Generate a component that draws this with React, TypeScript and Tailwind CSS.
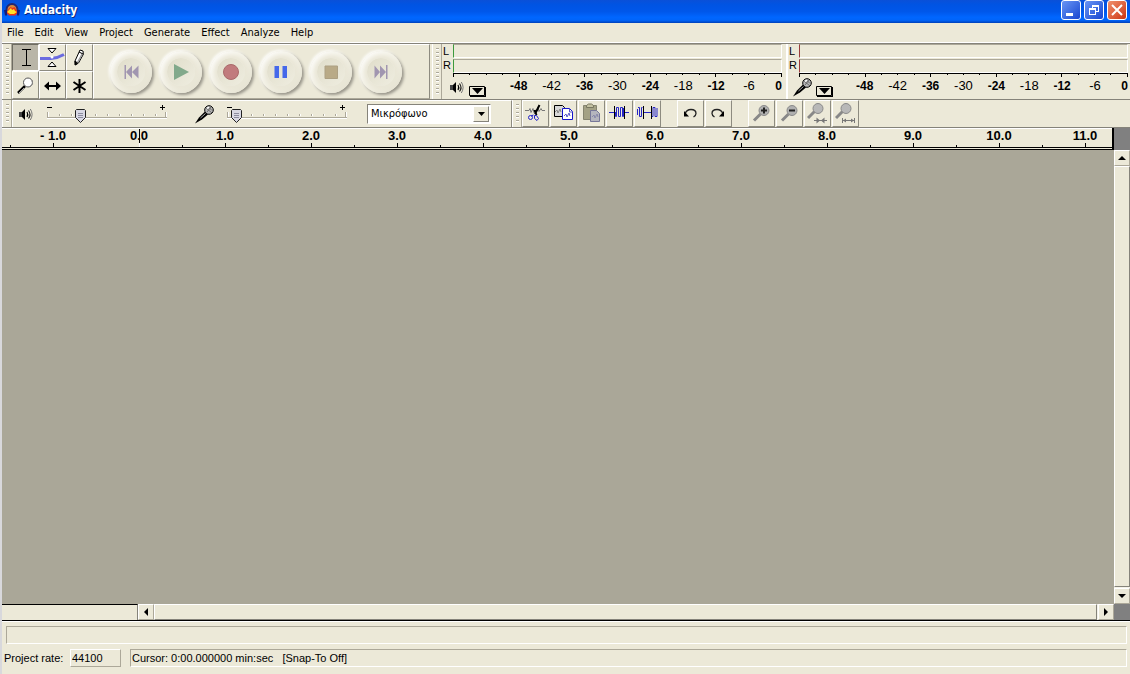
import { useState } from 'react';
import type { ReactNode } from 'react';

const menus = ['File', 'Edit', 'View', 'Project', 'Generate', 'Effect', 'Analyze', 'Help'];
const seconds = [-1, 0, 1, 2, 3, 4, 5, 6, 7, 8, 9, 10, 11];
const levels = [-48, -42, -36, -30, -24, -18, -12, -6];

function Grabber() {
  return (
    <div className="flex w-2.5 shrink-0 justify-center border-r border-[#aca899] border-l border-l-white py-1">
      <div className="w-[3px] bg-[repeating-linear-gradient(to_bottom,#aca899_0px,#aca899_1px,#ffffff_1px,#ffffff_2px,transparent_2px,transparent_4px)]" />
    </div>
  );
}

function Speaker() {
  return (
    <svg width="14" height="13" viewBox="0 0 14 13" className="shrink-0" fill="none">
      <path d="M0 4h3v5H0z" fill="#444" />
      <path d="M3 4l3-3v11l-3-3z" fill="#000" />
      <path d="M8 4q1.600 2.500 0 5" stroke="#000" strokeWidth="1.200" />
      <path d="M9.500 2.500q3 4 0 8" stroke="#222" strokeWidth="1.200" />
      <path d="M11.300 1q3.600 5.500 0 11" stroke="#777" />
    </svg>
  );
}

function Mic() {
  return (
    <svg width="20" height="20" viewBox="0 0 20 20" className="shrink-0">
      <path d="M0 19.500l4-6 6-6 3 3-6 5z" fill="#000" />
      <path d="M5.500 14l5-4.500" stroke="#aaa" />
      <circle cx="14" cy="6" r="4.300" fill="#b8b8b8" stroke="#000" />
      <path d="M11 4l6 5M13 2.500l4 4M12 8l4-5" stroke="#555" strokeWidth="0.800" />
      <path d="M12 4.500l2-1.500" stroke="#fff" strokeWidth="1.500" />
    </svg>
  );
}

const toolIcons: { name: string; icon: ReactNode }[] = [
  {
    name: 'Selection',
    icon: <path d="M9 4.500h9M9 20.500h9M13.500 5v15" stroke="#000" />,
  },
  {
    name: 'Envelope',
    icon: (
      <>
        <path d="M0 13.500h11q7-.500 13-4" stroke="#6b6be0" strokeWidth="3" />
        <path d="M8 3.500h8l-4 4.500zM8 21.500h8l-4-4.500z" fill="#fff" stroke="#000" />
        <circle cx="12" cy="12" r="1.500" fill="#fff" />
      </>
    ),
  },
  {
    name: 'Draw',
    icon: (
      <>
        <path d="M13 5l3 1 .5 3-5 9-3 2-.5-4z" fill="#fff" stroke="#000" />
        <path d="M16 7.500l-5.500 10" stroke="#999" strokeWidth="1.500" />
        <path d="M12 7l4 2M8 20v-4l2.500 2z" stroke="#000" fill="#000" />
      </>
    ),
  },
  {
    name: 'Zoom',
    icon: (
      <>
        <path d="M12 13l-7 7" stroke="#000" strokeWidth="2.500" />
        <path d="M11 15l-5 5" stroke="#aaa" />
        <circle cx="15" cy="9.500" r="4.500" fill="#fff" stroke="#555" />
        <path d="M19 7q2 4-2 7" stroke="#888" />
      </>
    ),
  },
  {
    name: 'Time Shift',
    icon: (
      <>
        <path d="M6 13h13" stroke="#000" strokeWidth="2" />
        <path d="M9 8.500v9L4 13zM16 8.500v9l5-4.500z" fill="#000" />
      </>
    ),
  },
  {
    name: 'Multi-Tool',
    icon: <path d="M12.500 6v14M6.500 9l12 8M18.500 9l-12 8" stroke="#000" strokeWidth="2" />,
  },
];

const transport: { name: string; icon: ReactNode }[] = [
  {
    name: 'Skip to Start',
    icon: <path d="M1.500 1h1.500v14H1.500zM9 1.500v13l-6-6.500zM15.500 1.500v13L9 8z" fill="#a196b0" />,
  },
  { name: 'Play', icon: <path d="M1 0l15 8-15 8z" fill="#82a98b" /> },
  { name: 'Record', icon: <circle cx="8" cy="8" r="7.500" fill="#c17b7d" stroke="#a96a6a" /> },
  { name: 'Pause', icon: <path d="M1.500 2H6v12H1.500zM9.500 2H14v12H9.500z" fill="#4568ea" /> },
  { name: 'Stop', icon: <path d="M2 2h12.500v12.500H2z" fill="#b9aa87" stroke="#ada083" /> },
  {
    name: 'Skip to End',
    icon: <path d="M13 1h1.500v14H13zM7 1.500v13L13 8zM1.500 1.500v13L7 8z" fill="#a196b0" />,
  },
];

const editIcons: { name: string; icon: ReactNode }[] = [
  {
    name: 'Cut',
    icon: (
      <>
        <path d="M0 7.500h4l1-2 1 4 2-4 1 4 1-2 1 2 2-5 1 4 2-3 1 2h3" stroke="#777" />
        <path d="M14.500 2l-4.500 9M9.500 7l2 5" stroke="#000" strokeWidth="2" />
        <path d="M8.500 12L6 13" stroke="#2222c8" />
        <circle cx="5.500" cy="14.500" r="2" stroke="#2222c8" />
        <path d="M9.500 12.500h2l2 3-1.500 2-2.500-2z" stroke="#2222c8" />
      </>
    ),
  },
  {
    name: 'Copy',
    icon: (
      <>
        <path d="M1.500 2.500h8l2 2v9h-10z" fill="#d8d8d8" stroke="#000" />
        <path d="M2 9l2-2 1 3 2-4 1 3" stroke="#888" />
        <path d="M9.500 5.500h7l3 3v8h-10z" fill="#fff" stroke="#1515cc" />
        <path d="M16.500 6v3h3M11 13l2-2 1 3 2-4 1 3" stroke="#5555cc" />
      </>
    ),
  },
  {
    name: 'Paste',
    icon: (
      <>
        <path d="M2.500 2.500h13v14h-13z" fill="#a3a184" stroke="#85846f" />
        <path d="M5.500 4.500v-2l2-1.500h3l2 1.500v2z" fill="#c4c2a2" stroke="#77765f" />
        <path d="M9.500 7.500h6l3 3v8h-9z" fill="#b5b5bd" stroke="#777799" />
        <path d="M11 14l2-2 1 3 2-4 1 3" stroke="#8888aa" />
      </>
    ),
  },
  {
    name: 'Trim',
    icon: (
      <>
        <path d="M0 9.500h5M16 9.500h4" stroke="#2525c5" />
        <path d="M6.500 9v4.500h1V4.500h2v9h2v-9h2v9h1V5" stroke="#2525c5" />
        <path d="M5.500 3v13M15.500 3v13" stroke="#000" />
      </>
    ),
  },
  {
    name: 'Silence',
    icon: (
      <>
        <path d="M.5 6v6M1 4.500h1.500v9h2v-9h1M7 9.500h7M14.500 13.500h1.500v-9h2v9h2V5" stroke="#2525c5" />
        <path d="M6.500 3v13M14.500 3v13" stroke="#000" />
      </>
    ),
  },
];

const undoIcons: { name: string; icon: ReactNode }[] = [
  {
    name: 'Undo',
    icon: (
      <>
        <path d="M5 11q1.500-4.500 6-4.500 5 0 5 4 0 2-2.500 3.500" stroke="#222" strokeWidth="1.300" />
        <path d="M4 8v5.500h5z" fill="#000" />
      </>
    ),
  },
  {
    name: 'Redo',
    icon: (
      <>
        <path d="M15 11q-1.500-4.500-6-4.500-5 0-5 4 0 2 2.500 3.500" stroke="#222" strokeWidth="1.300" />
        <path d="M16 8v5.500h-5z" fill="#000" />
      </>
    ),
  },
];

const zoomIcons: { name: string; icon: ReactNode }[] = [
  {
    name: 'Zoom In',
    icon: (
      <>
        <path d="M9.500 11L3 17.500" stroke="#888" strokeWidth="3" />
        <circle cx="13" cy="7.500" r="5" fill="#b0b0b0" stroke="#8a8a8a" />
        <path d="M13 4.500v6M10 7.500h6" stroke="#222" strokeWidth="2" />
      </>
    ),
  },
  {
    name: 'Zoom Out',
    icon: (
      <>
        <path d="M9.500 11L3 17.500" stroke="#888" strokeWidth="3" />
        <circle cx="13" cy="7.500" r="5" fill="#b0b0b0" stroke="#8a8a8a" />
        <path d="M10 7.500h6" stroke="#222" strokeWidth="2" />
      </>
    ),
  },
  {
    name: 'Fit Selection',
    icon: (
      <>
        <path d="M7.500 8.500L1 15" stroke="#888" strokeWidth="3" />
        <circle cx="11" cy="5.500" r="5" fill="#b8b8b8" stroke="#8a8a8a" />
        <path d="M7 17.500h13" stroke="#777" />
        <path d="M9.500 14.500l3.500 3-3.500 3zM17.500 14.500l-3.500 3 3.500 3z" fill="#777" />
      </>
    ),
  },
  {
    name: 'Fit Project',
    icon: (
      <>
        <path d="M7.500 8.500L1 15" stroke="#888" strokeWidth="3" />
        <circle cx="11" cy="5.500" r="5" fill="#b8b8b8" stroke="#8a8a8a" />
        <path d="M7.500 15v5M19.500 15v5M8 17.500h11" stroke="#777" />
        <path d="M8 17.500l3-2v4zM19 17.500l-3-2v4z" fill="#777" />
      </>
    ),
  },
];

function IconGroup({ items }: { items: { name: string; icon: ReactNode }[] }) {
  return (
    <div className="flex gap-px">
      {items.map((item) => (
        <button
          key={item.name}
          aria-label={item.name}
          className="flex w-[27px] items-center justify-center border-t border-l border-r border-b border-t-white border-l-white border-r-[#8d8b80] border-b-[#8d8b80]"
        >
          <svg width="21" height="21" viewBox="0 0 21 21" fill="none">{item.icon}</svg>
        </button>
      ))}
    </div>
  );
}

function VolumeSlider({ label, initial }: { label: string; initial: number }) {
  const [value, setValue] = useState(initial);
  const x = 3 + value * 1.05;

  return (
    <div className="relative h-5 w-[120px]">
      <svg width="120" height="20" viewBox="0 0 120 20" fill="none" shapeRendering="crispEdges">
        <path d="M0 3.500h5M113 3.500h5M115.500 1v5" stroke="#000" />
        <path d="M0 13.500h120" stroke="#aca899" />
        <path d="M0 14.500h120" stroke="#fff" />
        {Array.from({ length: 11 }, (_, i) => (
          <g key={i}>
            <path d={`M${i * 12 - (i === 10 ? 2 : 0) + 0.5} ${i % 10 ? 10 : 8}v${i % 10 ? 2 : 5}`} stroke="#aca899" />
            <path d={`M${i * 12 - (i === 10 ? 2 : 0) + 1.5} ${i % 10 ? 10 : 8}v${i % 10 ? 2 : 5}`} stroke="#fff" />
          </g>
        ))}
        <g transform={`translate(${Math.round(x)} 5)`} shapeRendering="auto">
          <path d="M1.500 .5h8l1 1v7l-5 5-5-5v-7z" fill="#d8d8e4" stroke="#222" />
          <path d="M3 4.500h5M3 6.500h5M3 8.500h5" stroke="#8c8ca0" />
        </g>
      </svg>
      <input
        type="range"
        aria-label={label}
        value={value}
        onChange={(e) => setValue(Number(e.target.value))}
        className="absolute inset-0 h-full w-full opacity-0"
      />
    </div>
  );
}

function Meter({ kind }: { kind: 'output' | 'input' }) {
  const edge = kind === 'output' ? 'border-l-[#3c9a3c]' : 'border-l-[#9a3c3c]';

  return (
    <div className={kind === 'output' ? 'flex flex-1 pr-1' : 'flex flex-1 border-l-2 border-white pr-0.5'}>
      <div className="w-[11px] shrink-0 pl-px text-[11px] leading-[14px]">
        <div>L</div>
        <div>R</div>
      </div>
      <div className="min-w-0 flex-1">
        <div className={`h-3.5 border border-[#aca899] border-r-white border-b-white ${edge}`} />
        <div className={`mt-px h-3.5 border border-[#aca899] border-r-white border-b-white ${edge}`} />
        <div className="flex h-1 items-start justify-between border-t border-black">
          {Array.from({ length: 21 }, (_, i) => (
            <span key={i} className={i % 4 === 0 ? 'h-[3px] w-px bg-black' : 'h-px w-px bg-black'} />
          ))}
        </div>
        <div className="flex h-[18px] items-center text-[13px]">
          <div className="flex w-[15%] items-center">
            <div className={kind === 'output' ? '-ml-[3px] flex items-center gap-1 pt-0.5' : '-ml-1.5 flex items-center gap-0.5 pt-0.5'}>
              {kind === 'output' ? <Speaker /> : <Mic />}
              <button aria-label={`${kind} meter menu`} className="mt-2 shrink-0">
                <svg width="19" height="13" viewBox="0 0 19 13" className="block">
                  <path d="M1.500 1.500h15v9h-15z" fill="#ece9d8" stroke="#000" />
                  <path d="M2 11.500h16M17.500 2v10" stroke="#000" />
                  <path d="M4 3h11L9.500 9z" fill="#000" />
                </svg>
              </button>
            </div>
          </div>
          {levels.map((db) => (
            <div key={db} className="flex w-[10%] justify-center">
              <span className={db % 12 === 0 ? 'text-[12px] font-bold' : ''}>{db}</span>
            </div>
          ))}
          <div className="flex w-[5%] justify-end text-[12px] font-bold">0</div>
        </div>
      </div>
    </div>
  );
}

function ScrollButton({ label, path }: { label: string; path: string }) {
  return (
    <button
      aria-label={label}
      className="flex h-4 w-4 shrink-0 items-center justify-center border border-white border-r-[#aca899] border-b-[#aca899] bg-[#ece9d8]"
    >
      <svg width="8" height="8" viewBox="0 0 8 8">
        <path d={path} fill="#000" />
      </svg>
    </button>
  );
}

function TitleBar() {
  return (
    <header className="flex h-[23px] shrink-0 items-start justify-between bg-[linear-gradient(to_bottom,#0a50d8_0%,#0054e3_20%,#0057ea_50%,#0066ff_75%,#0064fa_88%,#0040b8_100%)] pr-[3px] pl-0.5">
      <div className="flex items-center gap-1">
        <svg width="16" height="18" viewBox="0 0 16 18">
          <path d="M2.500 12V8.500a5.500 5.500 0 0 1 11 0V12" fill="#d98a3c" stroke="#26266e" strokeWidth="2" />
          <path d="M2.500 12l2-4 2-2 2 1 2-1 2 3 1 3-2 2.500H5z" fill="#ee3414" />
          <path d="M3 11l3-3 1-1 1 2 2-1 1 2 2 1-3 2H6z" fill="#ffe02c" />
          <path d="M0 9h3v5.500H1zM13 9h3l-1 5.500h-2z" fill="#141c7a" />
        </svg>
        <h1 className="font-['DejaVu_Sans_Condensed',sans-serif] text-[12px] leading-5 font-bold text-white [text-shadow:1px_1px_0_#0a2a80]">
          Audacity
        </h1>
      </div>
      <div className="flex gap-[3px]">
        <button aria-label="Minimize" className="h-5 w-5 rounded-[3px] border border-white bg-linear-to-br from-[#6a94f4] to-[#1a44d0]">
          <svg width="18" height="18" viewBox="0 0 18 18">
            <path d="M4 12h7v3H4z" fill="#fff" />
          </svg>
        </button>
        <button aria-label="Restore" className="h-5 w-5 rounded-[3px] border border-white bg-linear-to-br from-[#6a94f4] to-[#1a44d0]">
          <svg width="18" height="18" viewBox="0 0 18 18" fill="none" stroke="#fff" shapeRendering="crispEdges">
            <path d="M4.500 7.500h6v6h-6zM4 8.500h7M7.500 7V4.500h6v6H11M7 5.500h7" />
          </svg>
        </button>
        <button aria-label="Close" className="h-5 w-5 rounded-[3px] border border-white bg-linear-to-br from-[#f0906c] to-[#cc3008]">
          <svg width="18" height="18" viewBox="0 0 18 18">
            <path d="M4 4l10 10M14 4L4 14" stroke="#fff" strokeWidth="2" />
          </svg>
        </button>
      </div>
    </header>
  );
}

export default function App() {
  const [tool, setTool] = useState('Selection');
  const [rate, setRate] = useState('44100');

  return (
    <div className="flex h-screen flex-col overflow-hidden border-l-2 border-[#d8d8dc] bg-[#ece9d8] font-['Liberation_Sans',Arial,sans-serif] text-[11px] text-black">
      <TitleBar />

      <nav className="flex h-5 shrink-0 items-center gap-[11px] border-b border-white pt-0.5 pl-[5px] font-['DejaVu_Sans_Condensed',sans-serif] text-[11px]">
        {menus.map((menu) => (
          <button key={menu}>{menu}</button>
        ))}
      </nav>

      <div className="flex h-[57px] shrink-0 border-t border-b border-[#85837a]">
        <Grabber />
        <div className="grid w-[81px] shrink-0 grid-cols-3 grid-rows-[27px_28px]">
          {toolIcons.map((item) => (
            <button
              key={item.name}
              aria-label={item.name}
              onClick={() => setTool(item.name)}
              className={
                item.name === tool
                  ? 'flex items-center justify-center border border-[#6e6c62] border-r-white border-b-white bg-[#b9b5a7]'
                  : 'flex items-center justify-center border border-white border-r-[#8d8b80] border-b-[#8d8b80]'
              }
            >
              <svg width="25" height="25" viewBox="0 0 25 25" fill="none" className="shrink-0">{item.icon}</svg>
            </button>
          ))}
        </div>
        <div className="flex w-[337px] shrink-0 items-center border border-white border-r-[#8d8b80] border-b-[#aca899] pl-3">
          {transport.map((item) => (
            <button key={item.name} aria-label={item.name} className="flex h-[50px] w-[50px] items-center justify-center">
              <span className="flex h-[42px] w-[42px] items-center justify-center rounded-full bg-linear-to-br from-white via-[#f2f0e4] to-[#e2dfce] shadow-[2px_2px_3px_#98958a,-1px_-1px_3px_#ffffff]">
                <span className="flex h-7 w-7 items-center justify-center rounded-full bg-linear-to-br from-[#e0ddca] to-[#efede0] shadow-[0_0_4px_3px_#e9e6d6]">
                  <svg width="16" height="16" viewBox="0 0 16 16">{item.icon}</svg>
                </span>
              </span>
            </button>
          ))}
        </div>
        <div className="w-0.5 shrink-0" />
        <Grabber />
        <Meter kind="output" />
        <Meter kind="input" />
      </div>

      <div className="flex h-7 shrink-0 border-b border-[#85837a]">
        <Grabber />
        <div className="flex w-[500px] shrink-0 items-center border-t border-l border-white border-r border-r-[#8d8b80] pl-1.5">
          <Speaker />
          <div className="ml-3.5">
            <VolumeSlider label="Output volume" initial={24} />
          </div>
          <div className="mr-3 ml-7">
            <Mic />
          </div>
          <VolumeSlider label="Input volume" initial={1} />
          <div className="relative ml-5 h-5 w-[124px] border border-[#85837a] border-r-white border-b-white bg-white">
            <select
              aria-label="Input source"
              className="block h-full w-full appearance-none pl-[3px] font-['DejaVu_Sans_Condensed',sans-serif] text-[11px] outline-none"
            >
              <option>Μικρόφωνο</option>
            </select>
            <div className="pointer-events-none absolute top-px right-px flex h-4 w-4 items-center justify-center border border-white border-r-[#85837a] border-b-[#85837a] bg-[#ece9d8]">
              <svg width="7" height="4" viewBox="0 0 7 4">
                <path d="M0 0h7L3.500 4z" fill="#000" />
              </svg>
            </div>
          </div>
        </div>
        <Grabber />
        <div className="flex gap-4">
          <IconGroup items={editIcons} />
          <IconGroup items={undoIcons} />
          <IconGroup items={zoomIcons} />
        </div>
      </div>

      {/* timeline */}
      <div className="flex h-[22px] shrink-0 bg-[#808080]">
        <div className="min-w-0 flex-1 border-r-2 border-b border-black bg-[#ece9d8] pb-px">
          <div className="flex h-5 overflow-hidden border-t border-b border-t-white border-b-black pl-2">
            {seconds.map((s) => (
              <div key={s} className="relative flex w-[86px] shrink-0 flex-col justify-between">
                <div className="text-center text-[13px] leading-[14px] font-bold">
                  {s < 0 ? `- ${-s}.0` : `${s}.0`}
                </div>
                <div className="flex h-1 items-end">
                  <span className="h-0.5 w-px bg-black" />
                  <span className="flex-1" />
                  <span className={s === 0 ? 'h-1 w-px bg-white' : 'h-1 w-px bg-black'} />
                  <span className="flex-1" />
                </div>
                {s === 0 && <span className="absolute top-0 left-[43px] h-3.5 w-px bg-black" />}
              </div>
            ))}
          </div>
        </div>
        <div className="w-4 shrink-0" />
      </div>

      {/* track area */}
      <main className="flex min-h-0 flex-1">
        <div className="flex-1 bg-[#aaa798]" />
        <div className="flex w-4 shrink-0 flex-col bg-[#f4f2e8]">
          <ScrollButton label="Scroll up" path="M0 6h8L4 2z" />
          <div className="flex-1 border border-white border-r-[#85837a] border-b-[#85837a] bg-[#ece9d8]" />
          <div className="h-px" />
          <ScrollButton label="Scroll down" path="M0 2h8L4 6z" />
        </div>
      </main>
      <div className="flex h-[17px] shrink-0 border-b border-black bg-[#808080]">
        <div className="w-[136px] shrink-0 border-t border-r border-t-black border-r-[#85837a] bg-[#ece9d8]" />
        <ScrollButton label="Scroll left" path="M6 0v8L2 4z" />
        <div className="flex-1 border border-white border-r-[#85837a] border-b-[#85837a] bg-[#ece9d8]" />
        <div className="w-px shrink-0 bg-[#f4f2e8]" />
        <ScrollButton label="Scroll right" path="M2 0v8l4-4z" />
        <div className="w-4 shrink-0" />
      </div>

      <footer className="shrink-0 border-t border-white pt-1 pr-[3px] pb-[7px] pl-0.5">
        <div className="ml-0.5 h-[18px] border border-[#aca899] border-r-white border-b-white" />
        <div className="mt-[5px] flex h-[18px] items-center">
          <label htmlFor="rate" className="w-[66px] whitespace-nowrap">Project rate:</label>
          <input
            id="rate"
            value={rate}
            onChange={(e) => setRate(e.target.value)}
            className="h-[18px] w-[51px] border border-white border-r-[#aca899] border-b-[#aca899] pl-px outline-none"
          />
          <div className="ml-[9px] h-[18px] flex-1 border border-[#aca899] border-r-white border-b-white pl-px leading-4 whitespace-pre">
            {'Cursor: 0:00.000000 min:sec   [Snap-To Off]'}
          </div>
        </div>
      </footer>
    </div>
  );
}
